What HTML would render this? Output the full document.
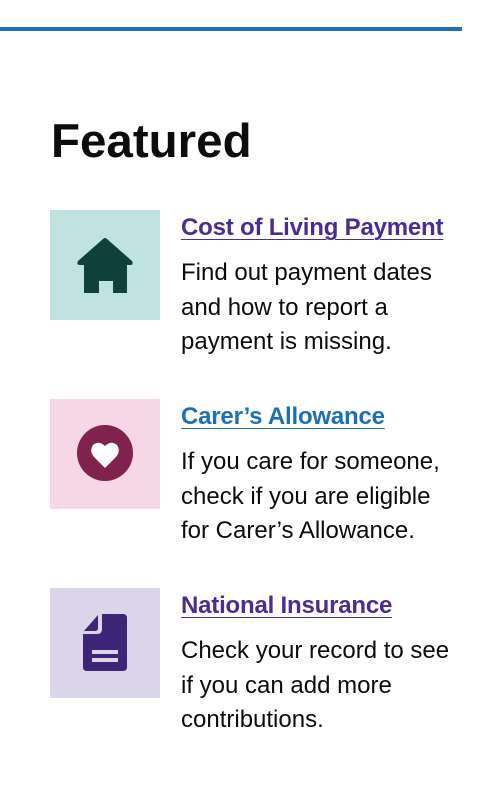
<!DOCTYPE html>
<html><head><meta charset="utf-8"><style>
body{margin:0;width:500px;height:790px;background:#fff;position:relative;font-family:"Liberation Sans",sans-serif;color:#0b0c0c;overflow:hidden}
.bar{position:absolute;left:0;top:27px;width:462px;height:4px;background:#1d70b8}
h2{position:absolute;left:51px;top:112px;margin:0;font-size:47.5px;font-weight:700;line-height:60px;letter-spacing:0px}
.box{position:absolute;left:50px;width:110px;height:110px}
.t{position:absolute;left:181px;width:320px;white-space:nowrap}
.t a{display:inline-block;font-size:24px;font-weight:700;line-height:30px;text-decoration:underline;text-decoration-thickness:1px;text-underline-offset:4px;letter-spacing:-0.2px}
.t p{margin:13px 0 0;font-size:24px;line-height:34.5px}
</style></head><body>
<div class="bar"></div>
<h2>Featured</h2>

<div class="box" style="top:210px;background:#bfe3e0">
<svg width="110" height="110" viewBox="0 0 110 110"><path d="M28 51 L53 29 Q55 27 57 29 L82 51 Q84 55 80 55 L77 55 L77 83 L63 83 L63 71 L49 71 L49 83 L34 83 L34 55 L30 55 Q26 55 28 51 Z" fill="#10403c"/></svg>
</div>
<div class="t" style="top:213px"><a style="color:#4c2c92">Cost of Living Payment</a>
<p>Find out payment dates<br>and how to report a<br>payment is missing.</p></div>

<div class="box" style="top:399px;background:#f6d7e6">
<svg width="110" height="110" viewBox="0 0 110 110"><circle cx="55" cy="54" r="28" fill="#80224d"/><path d="M55 69 L44 58 Q39 52 43 46 Q49 41 55 47 Q61 41 67 46 Q71 52 66 58 Z" fill="#fff"/></svg>
</div>
<div class="t" style="top:402px"><a style="color:#1d70b8">Carer’s Allowance</a>
<p>If you care for someone,<br>check if you are eligible<br>for Carer’s Allowance.</p></div>

<div class="box" style="top:588px;background:#dbd5e9">
<svg width="110" height="110" viewBox="0 0 110 110"><path d="M52 26 L73 26 Q77 26 77 30 L77 79 Q77 83 73 83 L37 83 Q33 83 33 79 L33 46 L47 46 Q52 46 52 41 Z" fill="#3f2577"/><path d="M48 27 L48 40 Q48 43 45 43 L34 43 Z" fill="#3f2577"/><rect x="42" y="62" width="26" height="4" fill="#dbd5e9"/><rect x="42" y="70" width="26" height="4" fill="#dbd5e9"/></svg>
</div>
<div class="t" style="top:591px"><a style="color:#4c2c92">National Insurance</a>
<p>Check your record to see<br>if you can add more<br>contributions.</p></div>
</body></html>
